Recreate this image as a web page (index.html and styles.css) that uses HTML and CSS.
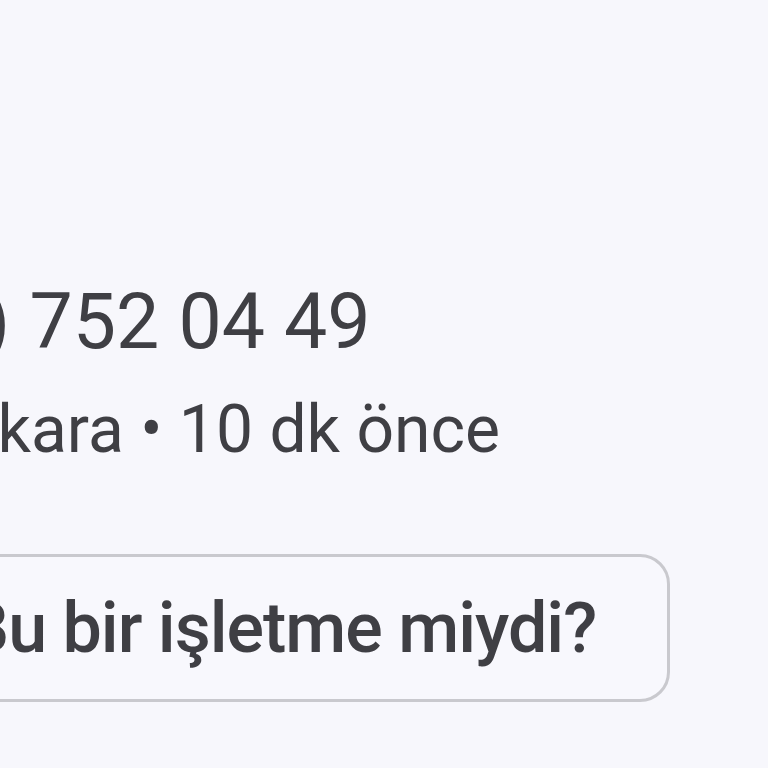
FILE: index.html
```html
<!DOCTYPE html>
<html lang="tr">

<head>
    <meta charset="UTF-8">
    <meta name="viewport" content="width=device-width, initial-scale=1.0">
    <title>Arama ayrıntıları</title>
    <link rel="stylesheet" href="styles.css">
</head>

<body>
    <main class="details">
        <p class="phone">0 (312) 752 04 49</p>
        <p class="meta">Ankara • 10 dk önce</p>
        <button class="ask" type="button">Bu bir işletme miydi?</button>
    </main>
</body>

</html>
```

FILE: styles.css
```css
* {
    box-sizing: border-box;
}

html, body {
    margin: 0;
    padding: 0;
    background-color: #f7f7fc;
    overflow: hidden;
}

body {
    width: 768px;
    height: 768px;
    font-family: Roboto, "Noto Sans", sans-serif;
    color: #3f3f44;
}

/* the card is wider than the screen, its left side runs off the edge */
.details {
    display: flex;
    flex-direction: column;
    align-items: flex-start;
    padding-top: 274px;
}

.phone {
    margin: 0 0 0 -235px;
    font-size: 77px;
    line-height: 96px;
    white-space: nowrap;
}

.meta {
    margin: 20px 0 0 -82px;
    font-size: 66px;
    line-height: 80px;
    white-space: nowrap;
}

.ask {
    margin: 84px 0 0 -66px;
    width: 736px;
    height: 148px;
    padding: 0 0 0 28px;
    border: 3px solid #c9c9ce;
    border-radius: 30px;
    background-color: #f8f8fd;
    font-family: inherit;
    font-size: 70px;
    font-weight: 500;
    letter-spacing: -1px;
    text-align: left;
    color: #3f3f44;
    white-space: nowrap;
}
```
